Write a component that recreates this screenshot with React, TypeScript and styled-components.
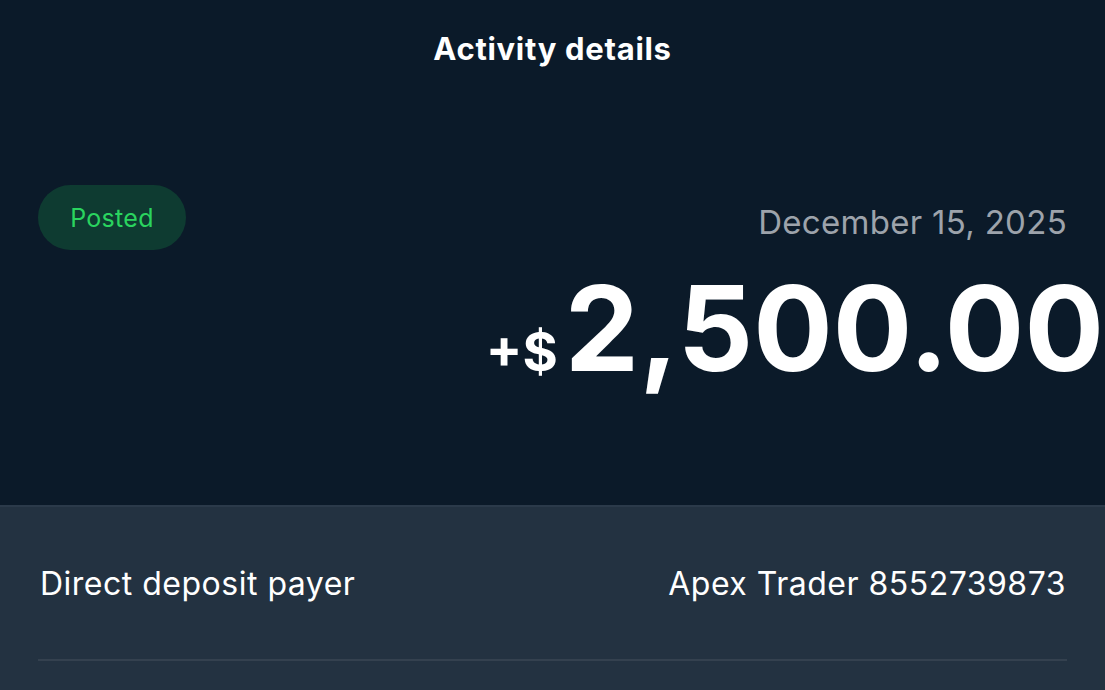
import styled, { createGlobalStyle } from "styled-components";

const GlobalStyle = createGlobalStyle`
  html, body {
    margin: 0;
    padding: 0;
    background: #0b1a29;
  }
  body {
    font-family: "Inter", "Noto Sans", sans-serif;
    color: #ffffff;
    overflow: hidden;
  }
`;

export default function App() {
  return (
    <Page>
      <GlobalStyle />
      <Header>
        <Title>Activity details</Title>
      </Header>
      <Summary>
        <StatusPill>Posted</StatusPill>
        <AmountBlock>
          <DateText>December 15, 2025</DateText>
          <Amount>
            <Sign>+$</Sign>
            <Figure>2,500.00</Figure>
          </Amount>
        </AmountBlock>
      </Summary>
      <Details>
        <DetailRow>
          <Label>Direct deposit payer</Label>
          <Value>Apex Trader 8552739873</Value>
        </DetailRow>
      </Details>
    </Page>
  );
}

const Page = styled.div`
  width: 1105px;
  height: 690px;
  display: flex;
  flex-direction: column;
  background: #0b1a29;
`;

const Header = styled.header`
  height: 96px;
  display: flex;
  justify-content: center;
  align-items: center;
`;

const Title = styled.h1`
  margin: 0;
  font-size: 31px;
  font-weight: 700;
  letter-spacing: 0.7px;
`;

const Summary = styled.section`
  height: 409px;
  display: flex;
  justify-content: space-between;
  align-items: flex-start;
  padding: 89px 38px 0 38px;
  box-sizing: border-box;
`;

const StatusPill = styled.span`
  width: 148px;
  height: 65px;
  border-radius: 33px;
  background: #0e3b31;
  color: #2ad45f;
  font-size: 25px;
  letter-spacing: 0.3px;
  display: flex;
  align-items: center;
  justify-content: center;
`;

const AmountBlock = styled.div`
  display: flex;
  flex-direction: column;
  align-items: flex-end;
  padding-top: 21px;
`;

const DateText = styled.div`
  font-size: 33px;
  letter-spacing: 0.3px;
  color: #9da3ab;
  line-height: 1;
  margin-right: 0px;
`;

const Amount = styled.div`
  display: flex;
  align-items: baseline;
  margin-right: -37px;
  margin-top: 30px;
  line-height: 1;
  font-weight: 700;
`;

const Sign = styled.span`
  font-size: 54px;
  margin-right: 7px;
`;

const Figure = styled.span`
  font-size: 118px;
`;

const Details = styled.section`
  flex: 1;
  background: #233241;
  border-top: 2px solid #2b3a4a;
  padding: 0 38px;
`;

const DetailRow = styled.div`
  height: 154px;
  display: flex;
  justify-content: space-between;
  align-items: center;
  border-bottom: 2px solid #34414f;
  box-sizing: border-box;
  padding: 0 1px 0 2px;
`;

const Label = styled.span`
  font-size: 32px;
  letter-spacing: 0.5px;
`;

const Value = styled.span`
  font-size: 32px;
  letter-spacing: 0.5px;
`;
